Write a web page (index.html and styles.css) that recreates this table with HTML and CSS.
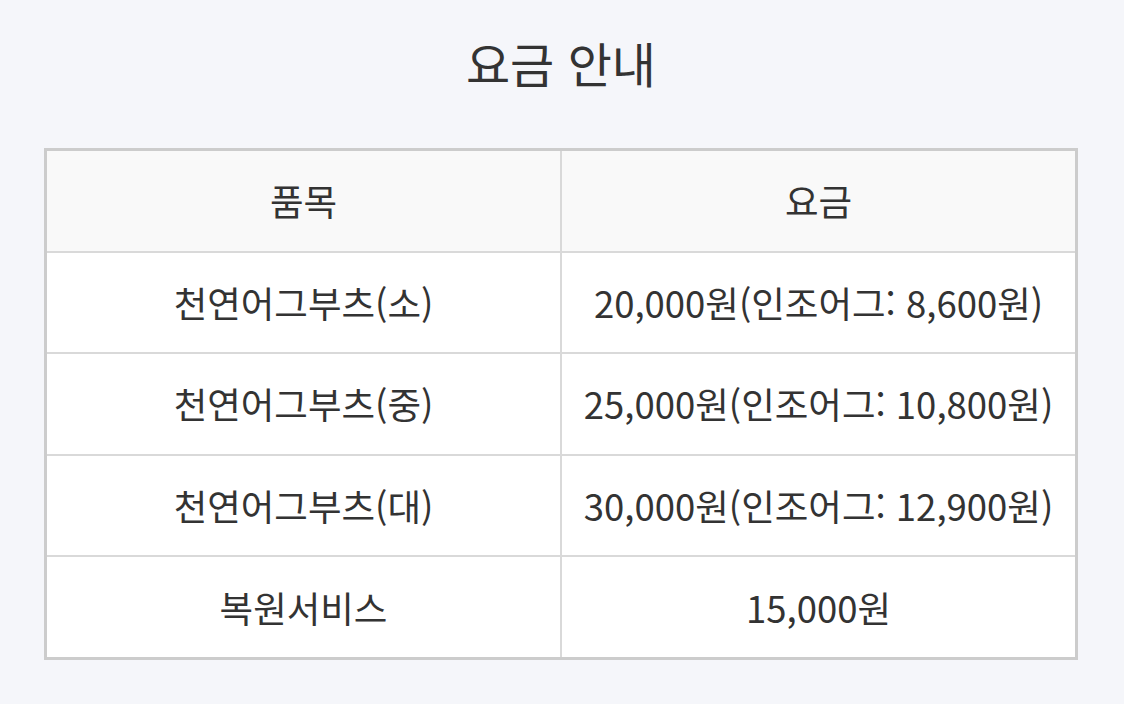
FILE: index.html
```html
<!DOCTYPE html>
<html lang="ko">
<head>
    <meta charset="UTF-8">
    <meta name="viewport" content="width=device-width, initial-scale=1.0">
    <title>요금 안내</title>
    <link rel="stylesheet" href="styles.css">
</head>
<body>
    <h1 class="page-title">요금 안내</h1>

    <table class="price-table">
        <thead>
            <tr>
                <th>품목</th>
                <th>요금</th>
            </tr>
        </thead>
        <tbody>
            <tr>
                <td>천연어그부츠(소)</td>
                <td>20,000원(인조어그: 8,600원)</td>
            </tr>
            <tr>
                <td>천연어그부츠(중)</td>
                <td>25,000원(인조어그: 10,800원)</td>
            </tr>
            <tr>
                <td>천연어그부츠(대)</td>
                <td>30,000원(인조어그: 12,900원)</td>
            </tr>
            <tr>
                <td>복원서비스</td>
                <td>15,000원</td>
            </tr>
        </tbody>
    </table>
</body>
</html>
```

FILE: styles.css
```css
body {
    font-family: "Noto Sans CJK KR", "Noto Sans", sans-serif;
    background-color: #f5f6fa;
    color: #333;
    margin: 0;
    padding: 0 46px 0 44px;
}

.page-title {
    font-size: 48px;
    font-weight: 400;
    line-height: 56px;
    text-align: center;
    margin: 34px 0 58px;
}

.price-table {
    width: 100%;
    border-collapse: collapse;
    border: 3px solid #ccc;
    background-color: #fff;
    table-layout: fixed;
}

.price-table th,
.price-table td {
    height: 99.6px;
    padding: 0;
    border: 2px solid #d9d9d9;
    font-size: 36.5px;
    font-weight: 400;
    text-align: center;
    vertical-align: middle;
}

.price-table th {
    background-color: #f9f9f9;
}
```
